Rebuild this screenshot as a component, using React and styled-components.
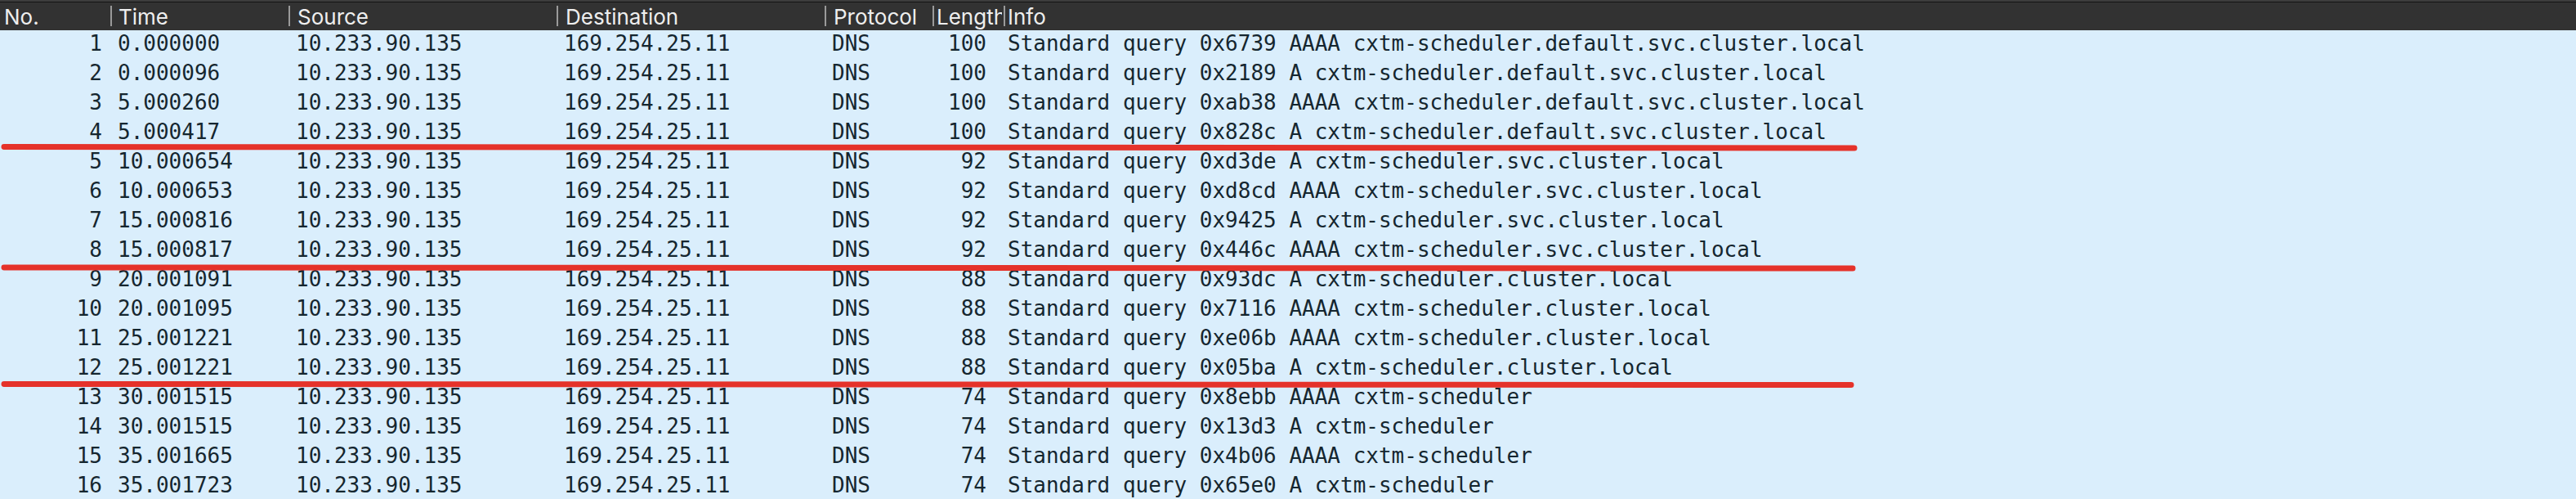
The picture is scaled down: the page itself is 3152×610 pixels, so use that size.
import React from "react";
import styled, { createGlobalStyle } from "styled-components";

const Global = createGlobalStyle`
  html, body { margin: 0; padding: 0; background: #daeefc; overflow: hidden; }
  #root { width: 3152px; height: 610px; }
`;

const COLS = "135px 218px 328px 328px 132px 87px 1fr";

const Frame = styled.div`
  position: relative;
  width: 3152px;
  height: 610px;
  overflow: hidden;
  background: #daeefc;
`;

const HeaderBar = styled.div`
  display: grid;
  grid-template-columns: ${COLS};
  height: 35px;
  background: #323232;
  border-top: 2px solid #3d3d3d;
  box-shadow: inset 0 1px 0 #141414;
  font-family: Inter, "Liberation Sans", sans-serif;
  font-size: 26px;
  color: #eeeeee;
`;

const HeaderCell = styled.div`
  display: flex;
  align-items: center;
  overflow: hidden;
  white-space: nowrap;
  padding-left: ${(p) => (p.$first ? "5px" : "0")};
  padding-right: 2px;
`;

const Sep = styled.span`
  flex: none;
  width: 2px;
  height: 25px;
  margin-right: ${(p) => p.$gap}px;
  background: #9a9a9a;
`;

const Label = styled.span`
  display: block;
  overflow: hidden;
  padding-top: 1px;
`;

const Body = styled.div`
  display: flex;
  flex-direction: column;
  font-family: "DejaVu Sans Mono", "Liberation Mono", monospace;
  font-size: 26px;
  color: #15262f;
`;

const Row = styled.div`
  display: grid;
  grid-template-columns: ${COLS};
  height: 36px;
  flex: none;
  line-height: 32px;
  white-space: nowrap;
`;

const Cell = styled.div`
  overflow: hidden;
  text-align: ${(p) => (p.$right ? "right" : "left")};
  padding-left: ${(p) => (p.$right ? 0 : p.$pl ?? 9)}px;
  padding-right: ${(p) => (p.$right ? p.$pr : 0)}px;
`;

const Marks = styled.svg`
  position: absolute;
  left: 0;
  top: 0;
  pointer-events: none;
`;

const headers = [
  { t: "No.", gap: 0 },
  { t: "Time", gap: 8 },
  { t: "Source", gap: 9 },
  { t: "Destination", gap: 9 },
  { t: "Protocol", gap: 9 },
  { t: "Length", gap: 3 },
  { t: "Info", gap: 3 },
];

const D = "cxtm-scheduler.default.svc.cluster.local";
const S = "cxtm-scheduler.svc.cluster.local";
const C = "cxtm-scheduler.cluster.local";
const P = "cxtm-scheduler";

const rows = [
  ["0.000000", "100", "0x6739 AAAA", D],
  ["0.000096", "100", "0x2189 A", D],
  ["5.000260", "100", "0xab38 AAAA", D],
  ["5.000417", "100", "0x828c A", D],
  ["10.000654", "92", "0xd3de A", S],
  ["10.000653", "92", "0xd8cd AAAA", S],
  ["15.000816", "92", "0x9425 A", S],
  ["15.000817", "92", "0x446c AAAA", S],
  ["20.001091", "88", "0x93dc A", C],
  ["20.001095", "88", "0x7116 AAAA", C],
  ["25.001221", "88", "0xe06b AAAA", C],
  ["25.001221", "88", "0x05ba A", C],
  ["30.001515", "74", "0x8ebb AAAA", P],
  ["30.001515", "74", "0x13d3 A", P],
  ["35.001665", "74", "0x4b06 AAAA", P],
  ["35.001723", "74", "0x65e0 A", P],
];

export default function App() {
  return (
    <>
      <Global />
      <Frame>
        <HeaderBar>
          {headers.map((h, i) => (
            <HeaderCell key={h.t} $first={i === 0}>
              {i > 0 && <Sep $gap={h.gap} />}
              <Label>{h.t}</Label>
            </HeaderCell>
          ))}
        </HeaderBar>
        <Body>
          {rows.map((r, i) => (
            <Row key={i}>
              <Cell $right $pr={10}>{i + 1}</Cell>
              <Cell>{r[0]}</Cell>
              <Cell>10.233.90.135</Cell>
              <Cell>169.254.25.11</Cell>
              <Cell>DNS</Cell>
              <Cell $right $pr={21}>{r[1]}</Cell>
              <Cell $pl={5}>Standard query {r[2]} {r[3]}</Cell>
            </Row>
          ))}
        </Body>
        <Marks width="3152" height="610" viewBox="0 0 3152 610">
          <g stroke="#e5322a" strokeWidth="7" strokeLinecap="round" fill="none">
            <line x1="5" y1="179.5" x2="2269" y2="181" />
            <line x1="5" y1="327" x2="2267" y2="328" />
            <line x1="5" y1="469.5" x2="2265" y2="470.5" />
          </g>
        </Marks>
      </Frame>
    </>
  );
}
